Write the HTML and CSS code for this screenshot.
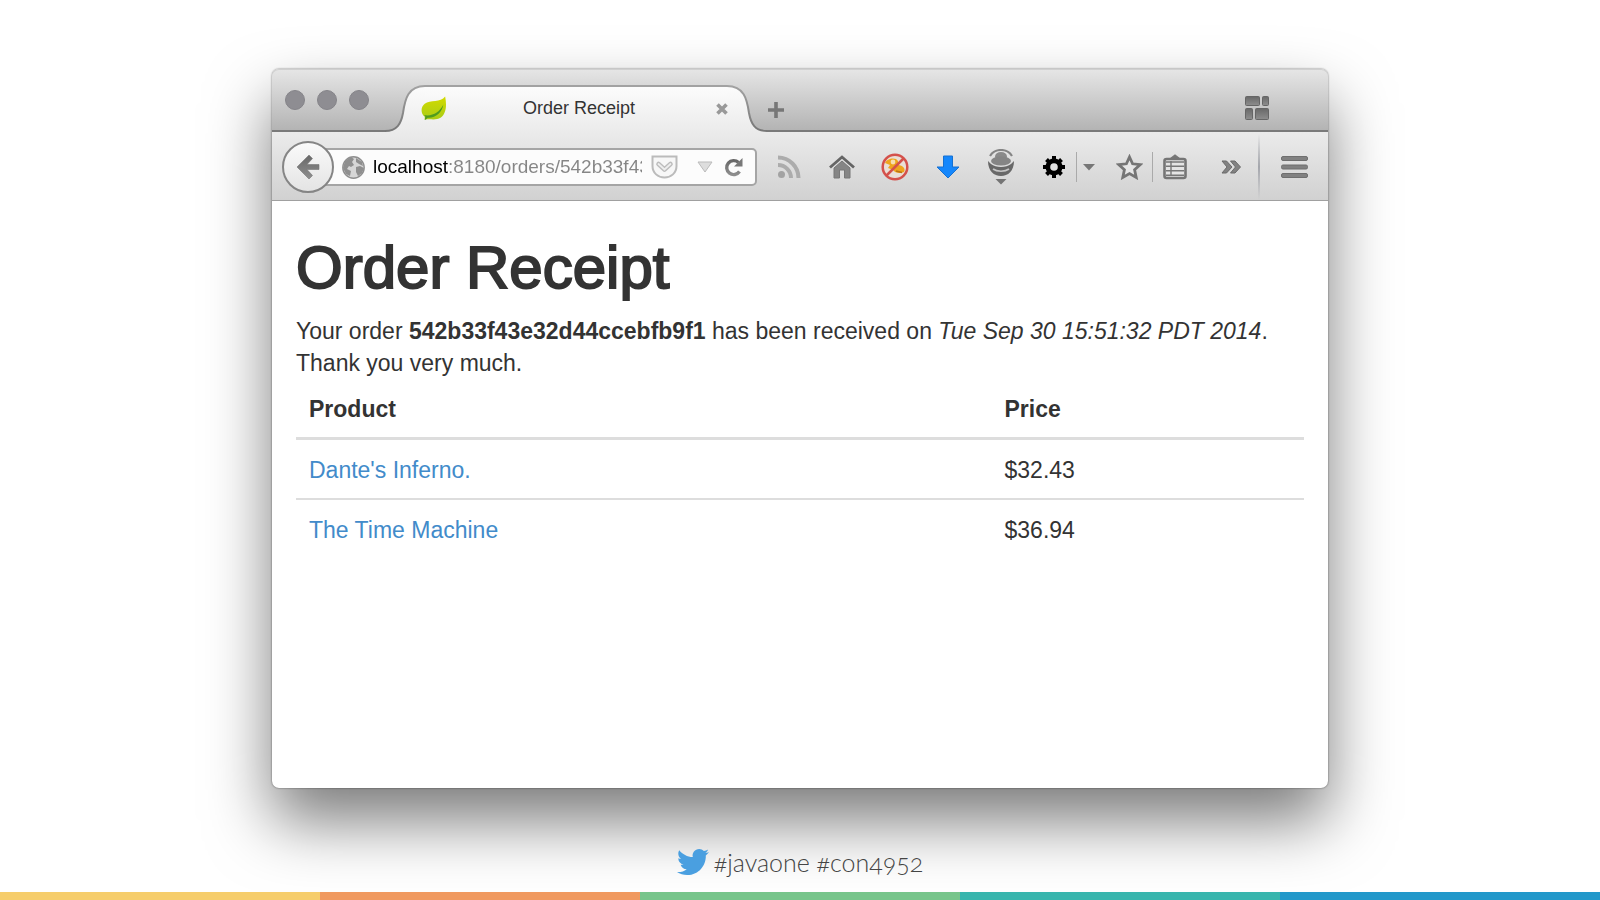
FILE: index.html
```html
<!DOCTYPE html>
<html lang="en">
<head>
<meta charset="utf-8">
<meta name="viewport" content="width=device-width, initial-scale=1">
<title>Order Receipt</title>
<link rel="stylesheet" href="styles.css">
</head>
<body>
<svg class="defs" width="0" height="0" aria-hidden="true">
  <defs>
    <linearGradient id="tabFill" x1="0" y1="0" x2="0" y2="1"><stop offset="0" stop-color="#fcfcfc"/><stop offset="1" stop-color="#ebebeb"/></linearGradient>
    <linearGradient id="tabLine" x1="0" y1="0" x2="0" y2="1"><stop offset="0" stop-color="#a2a2a2"/><stop offset="1" stop-color="#777"/></linearGradient>
    <linearGradient id="gray" x1="0" y1="0" x2="0" y2="1"><stop offset="0" stop-color="#686868"/><stop offset="1" stop-color="#8e8e8e"/></linearGradient>
    <linearGradient id="leaf" x1="0" y1="0" x2="0" y2="1"><stop offset="0" stop-color="#d3db00"/><stop offset="1" stop-color="#a9cc16"/></linearGradient>
  </defs>
</svg>
<main class="stage">
  <section class="window" aria-label="Browser window">
    <header class="tabstrip">
      <div class="lights"><span class="light"></span><span class="light"></span><span class="light"></span></div>
      <div class="tab">
        <svg class="tab-left" width="40" height="47" viewBox="0 0 40 47" aria-hidden="true"><path d="M0 47V46C12 46 16 39 18 28C20 14 23 1 40 1V47Z" fill="url(#tabFill)"/><path d="M0 46C12 46 16 39 18 28C20 14 23 1 40 1" fill="none" stroke="url(#tabLine)" stroke-width="2"/></svg>
        <div class="tab-mid"></div>
        <svg class="tab-right" width="40" height="47" viewBox="0 0 40 47" aria-hidden="true"><path d="M40 47V46C28 46 24 39 22 28C20 14 17 1 0 1V47Z" fill="url(#tabFill)"/><path d="M40 46C28 46 24 39 22 28C20 14 17 1 0 1" fill="none" stroke="url(#tabLine)" stroke-width="2"/></svg>
        <div class="tab-content">
          <svg width="26" height="25" viewBox="0 0 28 26" aria-hidden="true"><path d="M26 0C28 10 27 19 21 23C17 26 10 24 4 25L4 22C0 19 -1 12 4 8C10 3 21 7 26 0Z" fill="url(#leaf)"/><path d="M4 25C5 22 5 21 3 20C12 22 20 17 24 9C23 17 15 24 7 23C6 24 6 25 4 25Z" fill="#4f9b1f"/></svg>
          <span class="tab-title">Order Receipt</span>
          <button class="icon-button" type="button" aria-label="Close tab"><svg width="14" height="14" viewBox="0 0 14 14"><path d="M2.500 2.500L11.500 11.500M11.500 2.500L2.500 11.500" stroke="#999" stroke-width="3.600"/></svg></button>
        </div>
      </div>
      <button class="icon-button new-tab" type="button" aria-label="New tab"><svg width="18" height="18" viewBox="0 0 18 18"><path d="M9 1V17M1 9H17" stroke="#777" stroke-width="3.600"/></svg></button>
      <button class="icon-button groups" type="button" aria-label="Tab groups"><svg width="24" height="24" viewBox="0 0 24 24"><g fill="url(#gray)" stroke="#666"><rect x=".5" y=".5" width="14" height="9" rx="1"/><rect x="17.500" y=".5" width="6" height="9" rx="1"/><rect x=".5" y="12.500" width="7" height="11" rx="1"/><rect x="10.500" y="12.500" width="13" height="11" rx="1"/></g></svg></button>
    </header>

    <nav class="toolbar" aria-label="Browser toolbar">
      <button class="back" type="button" aria-label="Back"><svg width="24" height="26" viewBox="0 0 24 26"><path d="M1 13L13 1L16.500 4.500L11 10.500H23V15.500H11L16.500 21.500L13 25Z" fill="url(#gray)" stroke="#777" stroke-width=".6"/></svg></button>
      <div class="urlbar">
        <svg width="23" height="23" viewBox="0 0 23 23" aria-hidden="true"><circle cx="11.500" cy="11.500" r="10.700" fill="#d6d6d6" stroke="#8f8f8f" stroke-width="1.400"/><path d="M3 5L9 1L12 3L10 6L12 9L9 11L7 10L5 13L9 15L8 20L4 18L1 12ZM14 2L20 6L21 10L17 8L14 6ZM14 11L18 10L22 12L20 17L16 20L14 16Z" fill="#8f8f8f"/></svg>
        <input class="address" type="text" aria-label="Address" value="localhost:8180/orders/542b33f43e32d44ccebfb9f1">
        <button class="icon-button" type="button" aria-label="Save to Pocket"><svg width="27" height="24" viewBox="0 0 27 24"><path d="M1.500 1.500H25.500V11C25.500 18 20 22.500 13.500 22.500S1.500 18 1.500 11Z" fill="#f7f7f7" stroke="#bbb" stroke-width="2"/><path d="M7.500 9L13.500 14.500L19.500 9" fill="none" stroke="#bcbcbc" stroke-width="4.600" stroke-linecap="round" stroke-linejoin="round"/><path d="M7.500 9L13.500 14.500L19.500 9" fill="none" stroke="#eee" stroke-width="1.800" stroke-linecap="round"/></svg></button>
        <button class="icon-button history" type="button" aria-label="Show history"><svg width="16" height="12" viewBox="0 0 16 12"><path d="M1 1H15L8 11Z" fill="#ddd" stroke="#bbb"/></svg></button>
        <button class="icon-button" type="button" aria-label="Reload"><svg width="20" height="20" viewBox="0 0 20 20"><path d="M15.500 14.500A7 7 0 1 1 14.500 5.500" fill="none" stroke="url(#gray)" stroke-width="3.400"/><path d="M18.500 1V9.500H10Z" fill="#787878"/></svg></button>
      </div>

      <button class="tool" type="button" aria-label="Subscribe"><svg width="24" height="24" viewBox="0 0 24 24"><g fill="none" stroke="#acacac" stroke-width="4"><path d="M1 10A13 13 0 0 1 14 23"/><path d="M1 2.500A20.500 20.500 0 0 1 21.500 23"/></g><circle cx="4.500" cy="19.500" r="3.500" fill="#a3a3a3"/></svg></button>
      <button class="tool" type="button" aria-label="Home"><svg width="26" height="24" viewBox="0 0 26 24"><path d="M5 13L13 6L21 13V23H15.500V15H10.500V23H5Z" fill="#858585" stroke="#777"/><path d="M1 12.500L13 2L25 12.500" fill="none" stroke="#656565" stroke-width="2.800"/></svg></button>
      <button class="tool" type="button" aria-label="Blocked add-on"><svg width="28" height="28" viewBox="0 0 28 28"><circle cx="14" cy="14" r="12.500" fill="#eadfd6"/><path d="M4 10C6 5 15 4 17 8L17 12C22 12 25 16 23 19C19 21 14 20 12 17L7 15L9 12Z" fill="#efa51d"/><circle cx="12" cy="9" r="2.400" fill="#f7ddb0"/><path d="M15 18L21 19.500" stroke="#bd7414" stroke-width="1.500"/><circle cx="14" cy="14" r="12.300" fill="none" stroke="#d4514b" stroke-width="2.500"/><path d="M5.500 22.500L22.500 5.500" stroke="#d4514b" stroke-width="2.500"/></svg></button>
      <button class="tool" type="button" aria-label="Downloads"><svg width="24" height="24" viewBox="0 0 24 24"><path d="M7.500 1H16.500V12H23L12 23L1 12H7.500Z" fill="#1587fc" stroke="#1671d2"/></svg></button>
      <button class="tool" type="button" aria-label="Proxy menu"><svg width="28" height="36" viewBox="0 0 28 36"><path d="M3 7C8 -1 20 -1 25 7" fill="none" stroke="#858585" stroke-width="2.200"/><ellipse cx="14" cy="7.500" rx="6" ry="4.500" fill="#8a8a8a"/><ellipse cx="14" cy="12" rx="10" ry="4.500" fill="#858585"/><path d="M1 12C1 22 7 27 14 27S27 22 27 12L24 15C19 19 9 19 4 15Z" fill="#686868"/><path d="M6 20C10 23 18 23 22 20" fill="none" stroke="#c5c5c5" stroke-width="1.600"/><path d="M8.500 30H19.500L14 35.500Z" fill="#747474"/></svg></button>
      <button class="tool gear" type="button" aria-label="Settings"><svg width="24" height="24" viewBox="0 0 24 24"><g stroke="#000" stroke-width="4"><path d="M12 1V23M1 12H23"/><path d="M4.500 4.500L19.500 19.500M19.500 4.500L4.500 19.500"/></g><circle cx="12" cy="12" r="8.500"/><circle cx="12" cy="12" r="3.800" fill="#e2e2e2"/></svg></button>
      <span class="separator"></span>
      <button class="tool caret" type="button" aria-label="Settings menu"><svg width="12" height="8" viewBox="0 0 12 8"><path d="M0 1H12L6 7.500Z" fill="#777"/></svg></button>
      <button class="tool star" type="button" aria-label="Bookmark this page"><svg width="27" height="26" viewBox="0 0 27 26"><path d="M13.500 3L16.600 9.800L24.300 10.600L18.600 15.800L20.200 23.400L13.500 19.500L6.800 23.400L8.400 15.800L2.700 10.600L10.400 9.800Z" fill="#e6e6e6" stroke="#757575" stroke-width="2.800"/></svg></button>
      <span class="separator"></span>
      <button class="tool clip" type="button" aria-label="Bookmarks"><svg width="24" height="26" viewBox="0 0 24 26"><path d="M8 4.500L12 1.500L16 4.500" fill="#777" stroke="#777" stroke-width="2"/><rect x="1.500" y="5" width="21" height="19" rx="2" fill="#e4e4e4" stroke="#757575" stroke-width="2.600"/><path d="M3 8H21M3 12.200H21M3 16.700H21M3 21.200H21M8 7V22" stroke="#777" stroke-width="1.400"/></svg></button>
      <button class="tool more" type="button" aria-label="More tools"><svg width="20" height="14" viewBox="0 0 20 14"><path d="M1 1H5.500L11 7L5.500 13H1L6 7ZM9.500 1H14L19.500 7L14 13H9.500L14.500 7Z" fill="#828282" stroke="#6b6b6b"/></svg></button>
      <span class="divider"></span>
      <button class="tool menu" type="button" aria-label="Open menu"><svg width="27" height="22" viewBox="0 0 27 22"><g fill="#818181" stroke="#6f6f6f"><rect x=".5" y=".5" width="26" height="4" rx="1.500"/><rect x=".5" y="9" width="26" height="4" rx="1.500"/><rect x=".5" y="17.500" width="26" height="4" rx="1.500"/></g></svg></button>
    </nav>

    <article class="page">
      <h1 class="page-title">Order Receipt</h1>
      <p class="summary">Your order <strong>542b33f43e32d44ccebfb9f1</strong> has been received on <em>Tue Sep 30 15:51:32 PDT 2014</em>.<br>Thank you very much.</p>
      <table class="items">
        <thead><tr><th class="product" scope="col">Product</th><th scope="col">Price</th></tr></thead>
        <tbody>
          <tr><td><a href="#inferno">Dante's Inferno.</a></td><td>$32.43</td></tr>
          <tr><td><a href="#machine">The Time Machine</a></td><td>$36.94</td></tr>
        </tbody>
      </table>
    </article>
  </section>
</main>
<footer class="footer">
  <div class="tags">
    <svg width="32" height="26" viewBox="0 0 32 26" aria-hidden="true"><path d="M32 3.100C30.800 3.600 29.600 4 28.200 4.100C29.600 3.300 30.600 2 31.100.5C29.800 1.200 28.400 1.800 26.900 2.100C25.700.8 24 0 22.200 0C17.900 0 14.800 4 15.800 8.100C10.300 7.800 5.500 5.200 2.200 1.200C.5 4.200 1.300 8 4.300 10C3.200 10 2.200 9.600 1.300 9.200C1.300 12.200 3.400 14.900 6.500 15.600C5.600 15.800 4.600 15.900 3.600 15.700C4.400 18.300 6.800 20.200 9.700 20.200C7 22.400 3.500 23.300 0 23C2.900 24.900 6.400 26 10.100 26C22.300 26 29.200 15.700 28.800 6.400C30.100 5.500 31.200 4.400 32 3.100Z" fill="#4a9fe0"/></svg>
    <span>#javaone #con4952</span>
  </div>
  <div class="stripes"><span class="yellow"></span><span class="orange"></span><span class="green"></span><span class="teal"></span><span class="blue"></span></div>
</footer>
</body>
</html>
```
FILE: styles.css
```css
* { box-sizing: border-box; }
body {
  margin: 0;
  min-height: 100vh;
  display: flex;
  flex-direction: column;
  background: #fff;
  color: #333;
  font-family: "Liberation Sans", Arial, sans-serif;
}
svg { display: block; flex: none; }
.defs { position: absolute; }
button { border: 0; padding: 0; background: none; flex: none; }

.stage {
  flex: 1;
  display: flex;
  padding: 69px 17% 0;
}
.window {
  flex: 1;
  min-width: 0;
  display: flex;
  flex-direction: column;
  border-radius: 7px;
  background: #fff;
  box-shadow: 0 0 2px rgba(0, 0, 0, .6), 0 33px 64px rgba(0, 0, 0, .52);
}

.tabstrip {
  height: 63px;
  display: flex;
  align-items: flex-end;
  padding-left: 13px;
  border-radius: 7px 7px 0 0;
  background: linear-gradient(#e6e6e6, #b2b2b2);
  box-shadow: inset 0 -2px #7a7a7a, inset 0 1px #d0d0d0;
}
.lights { display: flex; gap: 12px; margin-bottom: 22px; }
.light { width: 20px; height: 20px; border-radius: 50%; background: #8e8d92; border: 1px solid #858489; }
.tab {
  flex: 0 1 382px;
  height: 47px;
  margin-left: 16px;
  display: grid;
  grid-template-columns: 40px 1fr 40px;
  grid-template-rows: 47px;
}
.tab-left, .tab-mid, .tab-right, .tab-content { grid-row: 1; }
.tab-left { grid-column: 1; }
.tab-mid { grid-column: 2; border-top: 2px solid #a2a2a2; background: linear-gradient(#fcfcfc, #ebebeb); }
.tab-right { grid-column: 3; }
.tab-content {
  grid-column: 1 / -1;
  display: flex;
  align-items: center;
  padding: 0 38px 0 36px;
}
.tab-title { flex: 1; text-align: center; font-size: 18px; line-height: 24px; padding: 0 4px 2px 0; }
.new-tab { margin-bottom: 13px; }
.groups { margin: 0 59px 12px auto; }

.toolbar {
  height: 69px;
  display: flex;
  align-items: center;
  padding: 2px 0 0 10px;
  background: linear-gradient(#ebebeb, #d1d1d1);
  border-bottom: 1px solid #a0a0a0;
}
.back {
  position: relative;
  width: 52px;
  height: 52px;
  display: grid;
  place-items: center;
  border: 2px solid #858585;
  border-radius: 50%;
  background: linear-gradient(#fafafa, #e4e4e4);
}
.urlbar {
  flex: 1;
  min-width: 0;
  height: 38px;
  display: flex;
  align-items: center;
  margin: 0 5px 0 -12px;
  padding: 0 11px 0 18px;
  border: 2px solid #a5a5a5;
  border-radius: 0 5px 5px 0;
  background: #fcfcfc;
}
.address {
  flex: 1;
  min-width: 0;
  height: 28px;
  margin: 0 9px 0 8px;
  padding: 0;
  border: 0;
  font: 19px/28px "Liberation Sans", Arial, sans-serif;
  color: transparent;
  background: linear-gradient(90deg, #000 75px, #858585 75px);
  -webkit-background-clip: text;
  background-clip: text;
}
.history { margin: 0 11px 0 19px; }
.tool { width: 53px; height: 44px; display: grid; place-items: center; }
.gear { width: 49px; padding-left: 4px; }
.separator { width: 1px; height: 30px; background: #aaa; }
.caret { width: 24px; }
.star { width: 51px; padding-left: 6px; }
.clip { width: 43px; }
.more { width: 62px; padding-left: 8px; }
.divider { width: 2px; height: 66px; background: linear-gradient(rgba(150, 152, 160, 0), #a4a6ac, rgba(150, 152, 160, 0)); }
.menu { width: 68px; }

.page { padding: 34px 24px 24px; }
.page-title {
  margin: 0 0 14px;
  font-size: 60px;
  line-height: 66px;
  font-weight: 400;
  -webkit-text-stroke: 2px #333;
}
.summary { margin: 0; font-size: 23px; line-height: 32px; }
.items { width: 100%; border-collapse: collapse; font-size: 23px; line-height: 32px; }
.items th, .items td { padding: 14px 13px 12px; text-align: left; }
.items th { border-bottom: 3px solid #ddd; }
.items td { border-bottom: 2px solid #ddd; }
.items tr:last-child td { border-bottom: 0; }
.items a { color: #428bca; text-decoration: none; }
.product { width: 69%; }

.footer { position: relative; padding-top: 56px; }
.tags {
  display: flex;
  justify-content: center;
  align-items: center;
  gap: 5px;
  height: 36px;
  margin-bottom: 12px;
  font: 300 25px/36px Lato, "Open Sans", sans-serif;
  font-variant-numeric: oldstyle-nums;
  color: #444;
}
.stripes { display: grid; grid-template-columns: repeat(5, 1fr); height: 8px; }
.yellow { background: #f6cd6b; }
.orange { background: #f0995f; }
.green { background: #77c58b; }
.teal { background: #37b5ad; }
.blue { background: #2298ca; }
```
